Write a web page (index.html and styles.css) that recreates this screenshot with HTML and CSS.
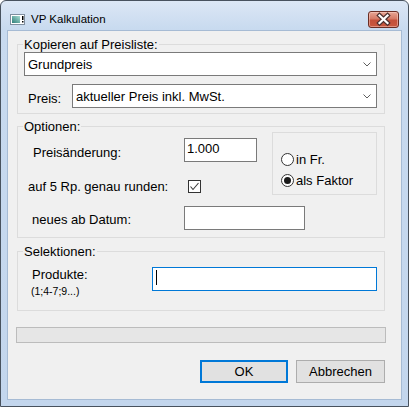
FILE: index.html
```html
<!DOCTYPE html>
<html>
<head>
<meta charset="utf-8">
<link rel="stylesheet" href="styles.css">
</head>
<body>
<div class="window">
  <div class="titlebar">
    <svg class="app-icon" width="15" height="11" viewBox="0 0 15 11">
      <defs>
        <linearGradient id="ig" x1="0" y1="1" x2="1" y2="0">
          <stop offset="0" stop-color="#2f7f7a"/>
          <stop offset="1" stop-color="#a8dcd2"/>
        </linearGradient>
      </defs>
      <rect x="0.5" y="0.5" width="14" height="10" fill="#ffffff" stroke="#7f8e9e"/>
      <rect x="2" y="2" width="8" height="7" fill="url(#ig)"/>
      <rect x="12" y="2" width="1.5" height="4" fill="#000"/>
      <rect x="12" y="7" width="1.5" height="1.5" fill="#000"/>
    </svg>
    <span class="title">VP Kalkulation</span>
    <div class="close">
      <svg width="31" height="17" viewBox="0 0 31 17">
        <path d="M11.5 4.5 L19.5 12 M19.5 4.5 L11.5 12" stroke="#4d3030" stroke-width="4.5" stroke-linecap="square" fill="none"/>
        <path d="M11.5 4.5 L19.5 12 M19.5 4.5 L11.5 12" stroke="#ffffff" stroke-width="2.2" stroke-linecap="square" fill="none"/>
      </svg>
    </div>
  </div>
  <div class="client">
    <div class="group g1">
      <div class="group-title">Kopieren auf Preisliste:</div>
      <div class="combo combo-full">
        <span class="combo-text">Grundpreis</span>
        <svg class="chev" width="8" height="5" viewBox="0 0 8 5"><path d="M0.5 0.5 L4 4 L7.5 0.5" stroke="#5f5f5f" fill="none"/></svg>
      </div>
      <div class="preis-row">
        <span class="preis-lbl">Preis:</span>
        <div class="combo combo-preis">
          <span class="combo-text">aktueller Preis inkl. MwSt.</span>
          <svg class="chev" width="8" height="5" viewBox="0 0 8 5"><path d="M0.5 0.5 L4 4 L7.5 0.5" stroke="#5f5f5f" fill="none"/></svg>
        </div>
      </div>
    </div>

    <div class="group g2">
      <div class="group-title">Optionen:</div>
      <div class="opt-body">
        <div class="opt-left">
          <div class="opt-row r1">
            <span class="opt-lbl l1">Preisänderung:</span>
            <div class="textbox tb-num">1.000</div>
          </div>
          <div class="opt-row r2">
            <span class="opt-lbl l2">auf 5 Rp. genau runden:</span>
            <span class="checkbox">
              <svg width="11" height="11" viewBox="0 0 11 11"><path d="M1.5 5.5 L4 8.5 L9.5 2" stroke="#3a3a3a" stroke-width="1.1" fill="none"/></svg>
            </span>
          </div>
          <div class="opt-row r3">
            <span class="opt-lbl l3">neues ab Datum:</span>
            <div class="textbox tb-date"></div>
          </div>
        </div>
        <div class="radio-box">
          <div class="radio-row"><span class="radio"></span><span>in Fr.</span></div>
          <div class="radio-row"><span class="radio checked"></span><span>als Faktor</span></div>
        </div>
      </div>
    </div>

    <div class="group g3">
      <div class="group-title">Selektionen:</div>
      <div class="sel-body">
        <div class="sel-left">
          <div class="sel-lbl">Produkte:</div>
          <div class="sel-hint">(1;4-7;9...)</div>
        </div>
        <div class="textbox tb-sel focused"><span class="caret"></span></div>
      </div>
    </div>

    <div class="progress"></div>

    <div class="buttons">
      <div class="btn btn-default">OK</div>
      <div class="btn">Abbrechen</div>
    </div>
  </div>
</div>
</body>
</html>
```

FILE: styles.css
```css
html, body {
  margin: 0;
  padding: 0;
  background: #ffffff;
}

body {
  font-family: "Liberation Sans", Arial, sans-serif;
  font-size: 13px;
  color: #000;
}

.window {
  width: 409px;
  height: 407px;
  box-sizing: border-box;
  border: 1px solid #48525e;
  border-radius: 6px 6px 0 0;
  background: linear-gradient(to bottom, #dce7f5 0px, #c8daef 28px, #c3d6ed 100%);
  padding: 0 6px 6px 6px;
  display: flex;
  flex-direction: column;
}

.titlebar {
  height: 29px;
  box-sizing: border-box;
  padding-top: 7px;
  display: flex;
  align-items: center;
  flex: none;
}

.app-icon {
  margin-left: 3px;
  flex: none;
}

.title {
  margin-left: 6px;
  font-size: 11.5px;
  color: #000;
}

.close {
  margin-left: auto;
  margin-right: 3px;
  width: 31px;
  height: 17px;
  box-sizing: border-box;
  border: 1px solid #6a2d24;
  border-radius: 3px;
  background: linear-gradient(to bottom, #e7a695 0%, #d67a66 45%, #c4503a 55%, #c9583f 100%);
  box-shadow: inset 0 0 0 1px rgba(255, 220, 210, 0.45);
  display: flex;
  align-items: center;
  justify-content: center;
  overflow: hidden;
}

.close svg {
  flex: none;
  margin: -1px;
}

.client {
  flex: 1;
  border: 1px solid #a6bbd4;
  background: #f0f0f0;
  padding: 0 16px 0 9px;
  display: flex;
  flex-direction: column;
}

.group {
  border: 1px solid #dcdcdc;
  flex: none;
}

.group-title {
  width: fit-content;
  height: 15px;
  line-height: 15px;
  margin: -8px 0 -7px 5px;
  padding: 0 1px;
  background: #f0f0f0;
}

.g1 {
  margin-top: 13px;
  padding-bottom: 5px;
}

.combo {
  height: 24px;
  box-sizing: border-box;
  border: 1px solid #7a7a7a;
  background: #ffffff;
  display: flex;
  align-items: center;
  padding: 0 5px 0 3px;
}

.combo-text {
  flex: 1;
  line-height: 15px;
}

.chev {
  flex: none;
}

.combo-full {
  margin: 7px 7px 0 6px;
}

.preis-row {
  margin-top: 8px;
  display: flex;
  align-items: center;
}

.preis-lbl {
  margin-left: 10px;
  width: 44px;
  padding-top: 4px;
  line-height: 15px;
}

.combo-preis {
  width: 305px;
}

.g2 {
  margin-top: 12px;
}

.opt-body {
  display: flex;
  align-items: flex-start;
}

.opt-left {
  width: 254px;
  padding-top: 11px;
  padding-bottom: 7px;
}

.opt-row {
  height: 24px;
  display: flex;
  align-items: center;
}

.r2 {
  margin-top: 12px;
}

.r3 {
  margin-top: 8px;
}

.opt-lbl {
  line-height: 15px;
  flex: none;
}

.l1 {
  margin-left: 15px;
  width: 151px;
  padding-top: 5px;
}

.l2 {
  margin-left: 10px;
  width: 160px;
  padding-top: 1px;
}

.l3 {
  margin-left: 14px;
  width: 152px;
  padding-top: 3px;
}

.textbox {
  height: 24px;
  box-sizing: border-box;
  border: 1px solid #7a7a7a;
  background: #ffffff;
  padding: 2px 2px;
  line-height: 15px;
  flex: none;
}

.tb-num {
  width: 73px;
}

.tb-date {
  width: 121px;
}

.checkbox {
  width: 13px;
  height: 13px;
  box-sizing: border-box;
  border: 1px solid #333333;
  background: #ffffff;
  display: flex;
  align-items: center;
  justify-content: center;
  flex: none;
}

.radio-box {
  width: 105px;
  height: 63px;
  box-sizing: border-box;
  margin-top: 5px;
  margin-left: auto;
  margin-right: 7px;
  border: 1px solid #dcdcdc;
  padding: 16px 0 0 8px;
}

.radio-row {
  height: 21px;
  display: flex;
  align-items: center;
  line-height: 15px;
}

.radio {
  width: 13px;
  height: 13px;
  box-sizing: border-box;
  border: 1px solid #333333;
  border-radius: 50%;
  background: #ffffff;
  margin-right: 2px;
  flex: none;
  display: flex;
  align-items: center;
  justify-content: center;
}

.radio.checked::after {
  content: "";
  width: 7px;
  height: 7px;
  border-radius: 50%;
  background: #1a1a1a;
}

.g3 {
  margin-top: 13px;
  padding-bottom: 13px;
}

.sel-body {
  display: flex;
  align-items: flex-start;
}

.sel-left {
  margin-left: 14px;
  margin-top: 15px;
}

.sel-lbl {
  line-height: 15px;
}

.sel-hint {
  margin-top: 3px;
  margin-left: -1px;
  font-size: 10.5px;
  line-height: 12px;
}

.tb-sel {
  width: 225px;
  margin-left: auto;
  margin-right: 7px;
  margin-top: 15px;
}

.focused {
  border-color: #0078d7;
}

.caret {
  display: block;
  width: 1px;
  height: 15px;
  margin-left: 1px;
  background: #000;
}

.progress {
  margin: 16px -1px 0 -1px;
  height: 16px;
  box-sizing: border-box;
  border: 1px solid #bcbcbc;
  background: #e6e6e6;
  flex: none;
}

.buttons {
  margin-top: 17px;
  display: flex;
  justify-content: flex-end;
  gap: 8px;
  flex: none;
}

.btn {
  width: 89px;
  height: 23px;
  box-sizing: border-box;
  border: 1px solid #adadad;
  background: #e1e1e1;
  display: flex;
  align-items: center;
  justify-content: center;
  line-height: 15px;
}

.btn-default {
  width: 88px;
  border: 2px solid #0078d7;
}
```
